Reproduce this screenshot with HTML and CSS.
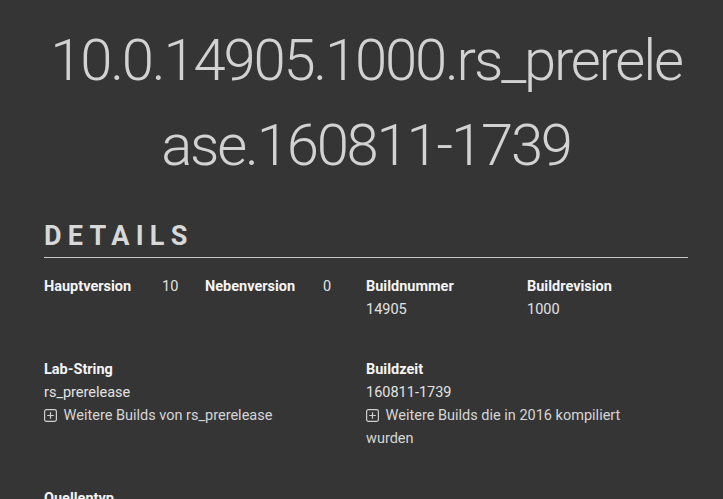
FILE: index.html
```html
<!DOCTYPE html>
<html lang="de">
<head>
<meta charset="utf-8">
<link rel="stylesheet" href="styles.css">
</head>
<body>
<main class="page">
  <h1 class="title">10.0.14905.1000.rs_prerelease.160811-1739</h1>
  <h2 class="section-title">DETAILS</h2>
  <div class="grid row-first">
    <div class="cell inline">
      <span class="label">Hauptversion</span><span class="value">10</span>
    </div>
    <div class="cell inline">
      <span class="label">Nebenversion</span><span class="value">0</span>
    </div>
    <div class="cell">
      <div class="label">Buildnummer</div>
      <div class="value">14905</div>
    </div>
    <div class="cell">
      <div class="label">Buildrevision</div>
      <div class="value">1000</div>
    </div>
  </div>
  <div class="grid row">
    <div class="cell wide">
      <div class="label">Lab-String</div>
      <div class="value">rs_prerelease</div>
      <div class="more"><svg class="icon" viewBox="0 0 13 13" width="13" height="13"><rect x="0.6" y="0.6" width="11.8" height="11.8" rx="1.8" fill="none" stroke="currentColor" stroke-width="1.2"/><path d="M6.5 3.2v6.6M3.2 6.5h6.6" stroke="currentColor" stroke-width="1.2"/></svg> Weitere Builds von rs_prerelease</div>
    </div>
    <div class="cell wide">
      <div class="label">Buildzeit</div>
      <div class="value">160811-1739</div>
      <div class="more"><svg class="icon" viewBox="0 0 13 13" width="13" height="13"><rect x="0.6" y="0.6" width="11.8" height="11.8" rx="1.8" fill="none" stroke="currentColor" stroke-width="1.2"/><path d="M6.5 3.2v6.6M3.2 6.5h6.6" stroke="currentColor" stroke-width="1.2"/></svg> Weitere Builds die in 2016 kompiliert wurden</div>
    </div>
  </div>
  <div class="grid row">
    <div class="cell wide">
      <div class="label">Quellentyp</div>
    </div>
  </div>
</main>
</body>
</html>
```
FILE: styles.css
```css
html, body {
  margin: 0;
  padding: 0;
  background: #353535;
}
body {
  font-family: Roboto, "Liberation Sans", sans-serif;
  color: #e6e6e6;
  overflow: hidden;
}
.page {
  width: 644px;
  margin-left: 44px;
}
.title {
  margin: 18px 0 0;
  font-weight: 300;
  font-size: 58px;
  line-height: 85px;
  letter-spacing: -2.2px;
  text-align: center;
  word-break: break-all;
  color: #d2d2d2;
}
.section-title {
  margin: 32px 0 0;
  padding-bottom: 5px;
  font-size: 27px;
  font-weight: 700;
  letter-spacing: 6.3px;
  line-height: 32px;
  color: #d8d8d8;
  border-bottom: 1px solid #c8c8c8;
}
.grid {
  display: grid;
  grid-template-columns: repeat(4, 1fr);
  font-size: 14.5px;
  line-height: 23px;
}
.row-first {
  margin-top: 17px;
}
.row {
  margin-top: 37px;
}
.cell {
  padding-right: 20px;
}
.wide {
  grid-column: span 2;
  padding-right: 50px;
}
.inline {
  display: flex;
}
.inline .label {
  width: 118px;
  flex: none;
}
.label {
  font-weight: 700;
  color: #f4f4f4;
}
.value {
  color: #e2e2e2;
}
.more {
  color: #d6d6d6;
}
.icon {
  vertical-align: -1.5px;
  margin-right: 3px;
  color: #cfcfcf;
}
```
